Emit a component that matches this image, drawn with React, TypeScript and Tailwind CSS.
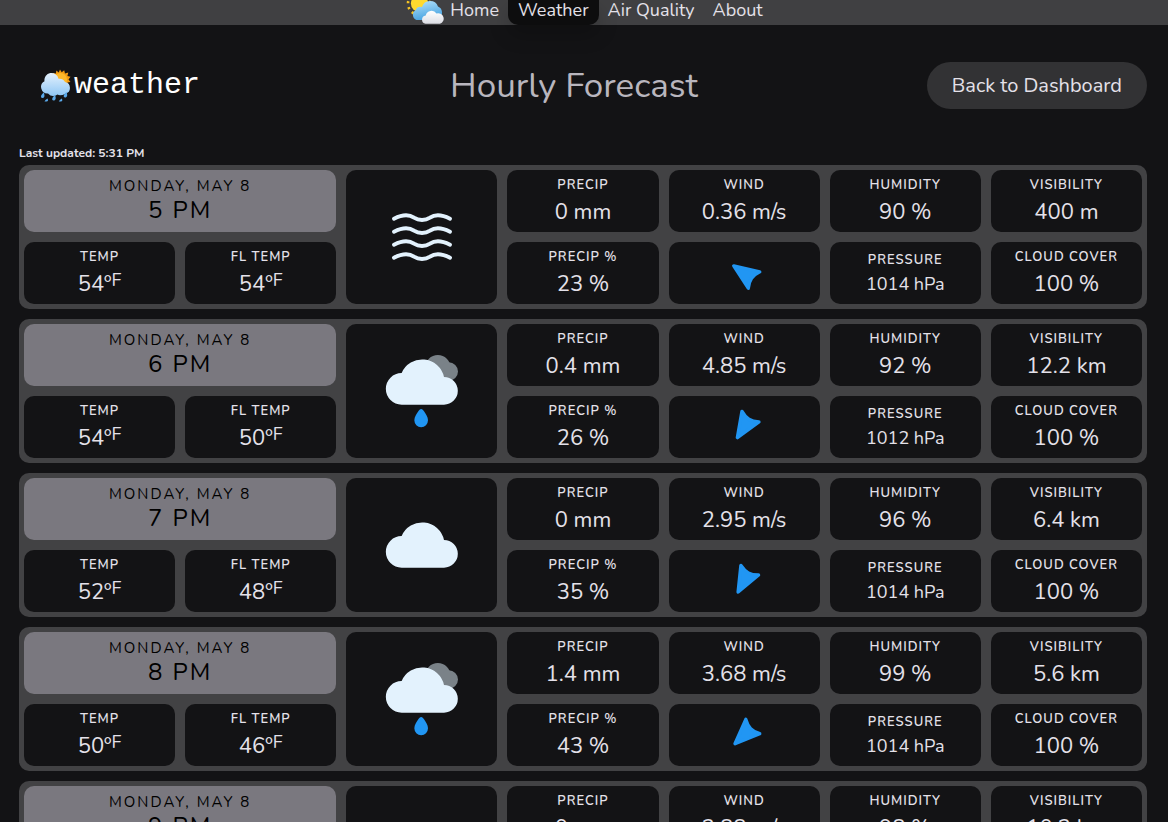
import type { ReactNode } from "react";

type IconName = "fog" | "cloud" | "rain";

interface Hour {
  time: string;
  icon: IconName;
  temp: number;
  feels: number;
  precip: string;
  chance: number;
  wind: string;
  windAngle: number;
  humidity: number;
  pressure: number;
  visibility: string;
}

const hours: Hour[] = [
  { time: "5 PM", icon: "fog", temp: 54, feels: 54, precip: "0 mm", chance: 23, wind: "0.36 m/s", windAngle: -55, humidity: 90, pressure: 1014, visibility: "400 m" },
  { time: "6 PM", icon: "rain", temp: 54, feels: 50, precip: "0.4 mm", chance: 26, wind: "4.85 m/s", windAngle: -148, humidity: 92, pressure: 1012, visibility: "12.2 km" },
  { time: "7 PM", icon: "cloud", temp: 52, feels: 48, precip: "0 mm", chance: 35, wind: "2.95 m/s", windAngle: -152, humidity: 96, pressure: 1014, visibility: "6.4 km" },
  { time: "8 PM", icon: "rain", temp: 50, feels: 46, precip: "1.4 mm", chance: 43, wind: "3.68 m/s", windAngle: -134, humidity: 99, pressure: 1014, visibility: "5.6 km" },
  { time: "9 PM", icon: "cloud", temp: 50, feels: 46, precip: "0 mm", chance: 40, wind: "2.88 m/s", windAngle: -130, humidity: 98, pressure: 1014, visibility: "10.2 km" },
];

const cloudPath =
  "M185 254A47.5 47.5 0 0 1 185 159A67 67 0 0 1 312 171A41.5 41.5 0 0 1 312 254Z";

function WeatherIcon({ name }: { name: IconName }) {
  return (
    <svg viewBox="96 63 300 300" className="size-[100px]" aria-hidden="true">
      {name === "fog" && (
        <g fill="none" stroke="#e3f2fd" strokeWidth="12" strokeLinecap="round">
          {[0, 39, 78, 117].map((dy) => (
            <path
              key={dy}
              transform={`translate(0 ${dy})`}
              d="M162 158C184 147 206 144 222 155C236 164 256 164 270 155C286 144 308 147 330 158"
            />
          ))}
        </g>
      )}
      {name === "cloud" && <path d={cloudPath} fill="#e3f2fd" transform="translate(0 27)" />}
      {name === "rain" && (
        <>
          <circle cx="293.5" cy="143" r="38" fill="#7a8288" />
          <circle cx="326" cy="154.5" r="28" fill="#7a8288" />
          <path d={cloudPath} fill="#e3f2fd" />
          <path
            d="M243.5 267C247 267 250 270 252 274C257 282 264 291 264 301A20.5 20.5 0 0 1 223 301C223 291 230 282 235 274C237 270 240 267 243.5 267Z"
            fill="#2196f3"
          />
        </>
      )}
    </svg>
  );
}

function WindArrow({ angle }: { angle: number }) {
  return (
    <svg viewBox="-20 -20 40 40" className="size-10" aria-hidden="true">
      <path
        transform={`rotate(${angle})`}
        d="M0 -12.5L10 12.2Q4.5 9.2 0 9.2Q-4.5 9.2 -10 12.2Z"
        fill="#2196f3"
        stroke="#2196f3"
        strokeWidth="3.4"
        strokeLinejoin="round"
      />
    </svg>
  );
}

function SunCloudIcon() {
  return (
    <svg viewBox="0 0 38 32" className="-mt-2 h-8 w-[38px]" aria-hidden="true">
      <defs>
        <linearGradient id="blueCloud" x1="0" y1="0" x2="0.3" y2="1">
          <stop offset="0" stopColor="#b5e2fb" />
          <stop offset="1" stopColor="#4aa5e2" />
        </linearGradient>
        <linearGradient id="whiteCloud" x1="0" y1="0" x2="0" y2="1">
          <stop offset="0" stopColor="#ffffff" />
          <stop offset="1" stopColor="#dcdde4" />
        </linearGradient>
      </defs>
      <circle cx="13.5" cy="11.5" r="11.5" fill="none" stroke="#f9c623" strokeWidth="2.6" strokeDasharray="2.2 3.82" />
      <circle cx="13.5" cy="11.5" r="8.6" fill="#ffd92e" />
      <path
        d="M10.5 28A5.5 5.5 0 0 1 9.5 18.2A5.500 5.500 0 0 1 16 15A8.500 8.500 0 0 1 32 14.500A6.500 6.500 0 0 1 33 26L28 28Z"
        fill="url(#blueCloud)"
      />
      <path
        d="M19.500 31.800A4.200 4.200 0 0 1 19.700 23.500A6 6 0 0 1 30.500 21.500A5.200 5.200 0 0 1 34 31.800Z"
        fill="url(#whiteCloud)"
      />
    </svg>
  );
}

function RainSunIcon() {
  return (
    <svg viewBox="0 0 31 33" className="h-[33px] w-[31px]" aria-hidden="true">
      <defs>
        <linearGradient id="logoCloud" x1="0" y1="0" x2="0" y2="1">
          <stop offset="0" stopColor="#e4f1fd" />
          <stop offset="1" stopColor="#8fc7f5" />
        </linearGradient>
      </defs>
      <path
        d="M20 0.5L21.7 3.3L24.2 1.2L25 4.500L28.300 3.600L27.400 7L30.500 7.800L28.500 10.500L30.500 13L27.500 13.500L29 16.500L13 12L10.500 7.500L13.500 7L12.500 4L15.800 4.600L16.400 1.500L18.700 3.500Z"
        fill="#f39c12"
      />
      <circle cx="20.5" cy="10.5" r="6.5" fill="#fdb92c" />
      <path
        d="M8 24.5A6.500 6.500 0 0 1 4.500 12.300A7 7 0 0 1 18.500 9.800A6.500 6.500 0 0 1 25 13A6 6 0 0 1 25.500 24.700Q20 27.500 17.500 25.500Q12 29 8 24.500Z"
        fill="url(#logoCloud)"
      />
      <g fill="#5aa9ea">
        <path d="M3.800 23.500C5 26.500 4.500 29 2.500 29C0.200 29 0.500 26 3.800 23.500Z" />
        <path d="M15 26C16.300 29 15.700 31.500 13.600 31.500C11.400 31.500 11.800 28.500 15 26Z" />
        <path d="M26.500 23C27.800 26 27.200 28.500 25.100 28.500C22.900 28.500 23.300 25.500 26.500 23Z" />
        <path d="M7.500 29.500C8.500 31.500 8 32.500 6.500 32.500H4.500Q5 31 7.500 29.500Z" />
        <path d="M21.800 29.500C22.800 31.500 22.300 32.500 20.800 32.500H18.800Q19.300 31 21.800 29.500Z" />
      </g>
    </svg>
  );
}

function Cell({ children, className = "" }: { children: ReactNode; className?: string }) {
  return (
    <div className={`flex flex-col items-center rounded-[10px] bg-[#131315] ${className}`}>
      {children}
    </div>
  );
}

function Label({ children }: { children: ReactNode }) {
  return (
    <h3 className="text-[13px] leading-5 font-semibold tracking-[1px] uppercase">{children}</h3>
  );
}

function Stat({ label, children }: { label: string; children: ReactNode }) {
  return (
    <Cell className="pt-[5px]">
      <Label>{label}</Label>
      <p className="text-[22px] leading-[34px]">{children}</p>
    </Cell>
  );
}

function Degrees({ value }: { value: number }) {
  return (
    <>
      {value}º<span className="relative -top-[5px] text-lg leading-none">F</span>
    </>
  );
}

function HourCard({ hour }: { hour: Hour }) {
  return (
    <li className="grid grid-cols-7 grid-rows-[62px_62px] gap-[10px] rounded-[10px] bg-[#424244] p-[5px]">
      <div className="col-span-2 flex flex-col items-center rounded-[10px] bg-[#7a787f] pt-1.5 text-black">
        <p className="text-[15px] leading-5 tracking-[2px] uppercase">Monday, May 8</p>
        <p className="text-2xl leading-7 tracking-[2px]">{hour.time}</p>
      </div>
      <Cell className="row-span-2 justify-center">
        <WeatherIcon name={hour.icon} />
      </Cell>
      <Stat label="Precip">{hour.precip}</Stat>
      <Stat label="Wind">{hour.wind}</Stat>
      <Stat label="Humidity">{hour.humidity} %</Stat>
      <Stat label="Visibility">{hour.visibility}</Stat>
      <Stat label="Temp">
        <Degrees value={hour.temp} />
      </Stat>
      <Stat label="FL Temp">
        <Degrees value={hour.feels} />
      </Stat>
      <Stat label="Precip %">{hour.chance} %</Stat>
      <Cell className="justify-center">
        <WindArrow angle={hour.windAngle} />
      </Cell>
      <Cell className="pt-2">
        <Label>Pressure</Label>
        <p className="text-lg leading-7">{hour.pressure} hPa</p>
      </Cell>
      <Stat label="Cloud cover">100 %</Stat>
    </li>
  );
}

export default function App() {
  return (
    <div className="min-h-screen bg-[#131315] pb-[10px] font-['Nunito','Lato',sans-serif] text-[#e4e1e9]">
      <nav className="flex h-[25px] justify-center bg-[#404042] pl-[10px] text-lg leading-5">
        <a href="#home" className="flex pr-[9px]">
          <SunCloudIcon />
          <span className="pl-1.5">Home</span>
        </a>
        <a
          href="#weather"
          aria-current="page"
          className="rounded-b-[10px] bg-[#0d0d0e] px-[10px] shadow-[0_10px_20px_rgba(0,0,0,0.2)]"
        >
          Weather
        </a>
        <a href="#air" className="px-[9px]">
          Air Quality
        </a>
        <a href="#about" className="px-[9px]">
          About
        </a>
      </nav>
      <main className="pr-[21px] pl-[19px]">
        <header className="flex items-center justify-between pt-[37px]">
          <div className="flex items-center px-[21px] font-['Liberation_Mono',monospace] text-[30px] leading-9 text-white">
            <RainSunIcon />
            <span className="pb-0.5 pl-[3px]">weather</span>
          </div>
          <h1 className="text-[35px] leading-[47px] text-[#b9b6be]">Hourly Forecast</h1>
          <button type="button" className="h-[47px] rounded-full bg-[#323234] px-[25px] text-xl">
            Back to Dashboard
          </button>
        </header>
        <p className="pt-9 text-xs leading-4 font-bold">Last updated: 5:31 PM</p>
        <ul className="flex flex-col gap-[10px] pt-1">
          {hours.map((hour) => (
            <HourCard key={hour.time} hour={hour} />
          ))}
        </ul>
      </main>
    </div>
  );
}
